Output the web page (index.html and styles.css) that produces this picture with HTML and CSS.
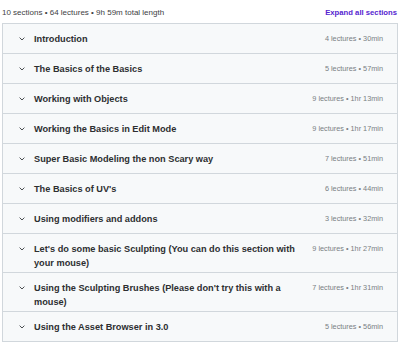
FILE: index.html
```html
<!DOCTYPE html>
<html lang="en">
<head>
    <meta charset="utf-8">
    <meta name="viewport" content="width=device-width, initial-scale=1">
    <title>Course content</title>
    <link rel="stylesheet" href="styles.css">
</head>
<body>
<div class="curriculum">
    <div class="summary">
        <span class="stats">10 sections • 64 lectures • 9h 59m total length</span>
        <button class="expand">Expand all sections</button>
    </div>

    <div class="sections">
        <div class="section">
            <span class="chevron"><svg viewBox="0 0 6 4" width="6" height="4"><path d="M0.6 0.6 L3 3 L5.4 0.6" /></svg></span>
            <span class="title">Introduction</span>
            <span class="meta">4 lectures • 30min</span>
        </div>
        <div class="section">
            <span class="chevron"><svg viewBox="0 0 6 4" width="6" height="4"><path d="M0.6 0.6 L3 3 L5.4 0.6" /></svg></span>
            <span class="title">The Basics of the Basics</span>
            <span class="meta">5 lectures • 57min</span>
        </div>
        <div class="section">
            <span class="chevron"><svg viewBox="0 0 6 4" width="6" height="4"><path d="M0.6 0.6 L3 3 L5.4 0.6" /></svg></span>
            <span class="title">Working with Objects</span>
            <span class="meta">9 lectures • 1hr 13min</span>
        </div>
        <div class="section">
            <span class="chevron"><svg viewBox="0 0 6 4" width="6" height="4"><path d="M0.6 0.6 L3 3 L5.4 0.6" /></svg></span>
            <span class="title">Working the Basics in Edit Mode</span>
            <span class="meta">9 lectures • 1hr 17min</span>
        </div>
        <div class="section">
            <span class="chevron"><svg viewBox="0 0 6 4" width="6" height="4"><path d="M0.6 0.6 L3 3 L5.4 0.6" /></svg></span>
            <span class="title">Super Basic Modeling the non Scary way</span>
            <span class="meta">7 lectures • 51min</span>
        </div>
        <div class="section">
            <span class="chevron"><svg viewBox="0 0 6 4" width="6" height="4"><path d="M0.6 0.6 L3 3 L5.4 0.6" /></svg></span>
            <span class="title">The Basics of UV's</span>
            <span class="meta">6 lectures • 44min</span>
        </div>
        <div class="section">
            <span class="chevron"><svg viewBox="0 0 6 4" width="6" height="4"><path d="M0.6 0.6 L3 3 L5.4 0.6" /></svg></span>
            <span class="title">Using modifiers and addons</span>
            <span class="meta">3 lectures • 32min</span>
        </div>
        <div class="section">
            <span class="chevron"><svg viewBox="0 0 6 4" width="6" height="4"><path d="M0.6 0.6 L3 3 L5.4 0.6" /></svg></span>
            <span class="title">Let's do some basic Sculpting (You can do this section with your mouse)</span>
            <span class="meta">9 lectures • 1hr 27min</span>
        </div>
        <div class="section">
            <span class="chevron"><svg viewBox="0 0 6 4" width="6" height="4"><path d="M0.6 0.6 L3 3 L5.4 0.6" /></svg></span>
            <span class="title">Using the Sculpting Brushes (Please don't try this with a mouse)</span>
            <span class="meta">7 lectures • 1hr 31min</span>
        </div>
        <div class="section">
            <span class="chevron"><svg viewBox="0 0 6 4" width="6" height="4"><path d="M0.6 0.6 L3 3 L5.4 0.6" /></svg></span>
            <span class="title">Using the Asset Browser in 3.0</span>
            <span class="meta">5 lectures • 56min</span>
        </div>
    </div>
</div>
</body>
</html>
```

FILE: styles.css
```css
body {
    margin: 0;
    background: #ffffff;
    font-family: "Liberation Sans", Arial, sans-serif;
    color: #2d2f31;
}
.curriculum {
    padding: 0 2px;
}
.summary {
    display: flex;
    justify-content: space-between;
    align-items: center;
    box-sizing: border-box;
    height: 23px;
    padding: 2px 1px 0 0;
}
.stats {
    font-size: 8px;
    color: #3e4143;
}
.expand {
    border: none;
    background: none;
    padding: 0;
    font-family: inherit;
    font-size: 7.7px;
    font-weight: bold;
    color: #5624d0;
}
.sections {
    border: 1px solid #d1d7dc;
    border-bottom: none;
}
.section {
    display: flex;
    align-items: flex-start;
    min-height: 30px;
    box-sizing: border-box;
    padding: 8px 14px 2px 16px;
    background: #f7f9fa;
    border-bottom: 1px solid #d1d7dc;
}
.chevron {
    width: 15px;
    height: 14px;
    flex: none;
    display: flex;
    align-items: center;
}
.chevron svg {
    fill: none;
    stroke: #4a4e51;
    stroke-width: 1;
}
.title {
    flex: 1;
    font-size: 9.2px;
    font-weight: bold;
    line-height: 14px;
    padding-right: 12px;
}
.meta {
    flex: none;
    font-size: 7.3px;
    line-height: 14px;
    color: #7a7f83;
}
```
